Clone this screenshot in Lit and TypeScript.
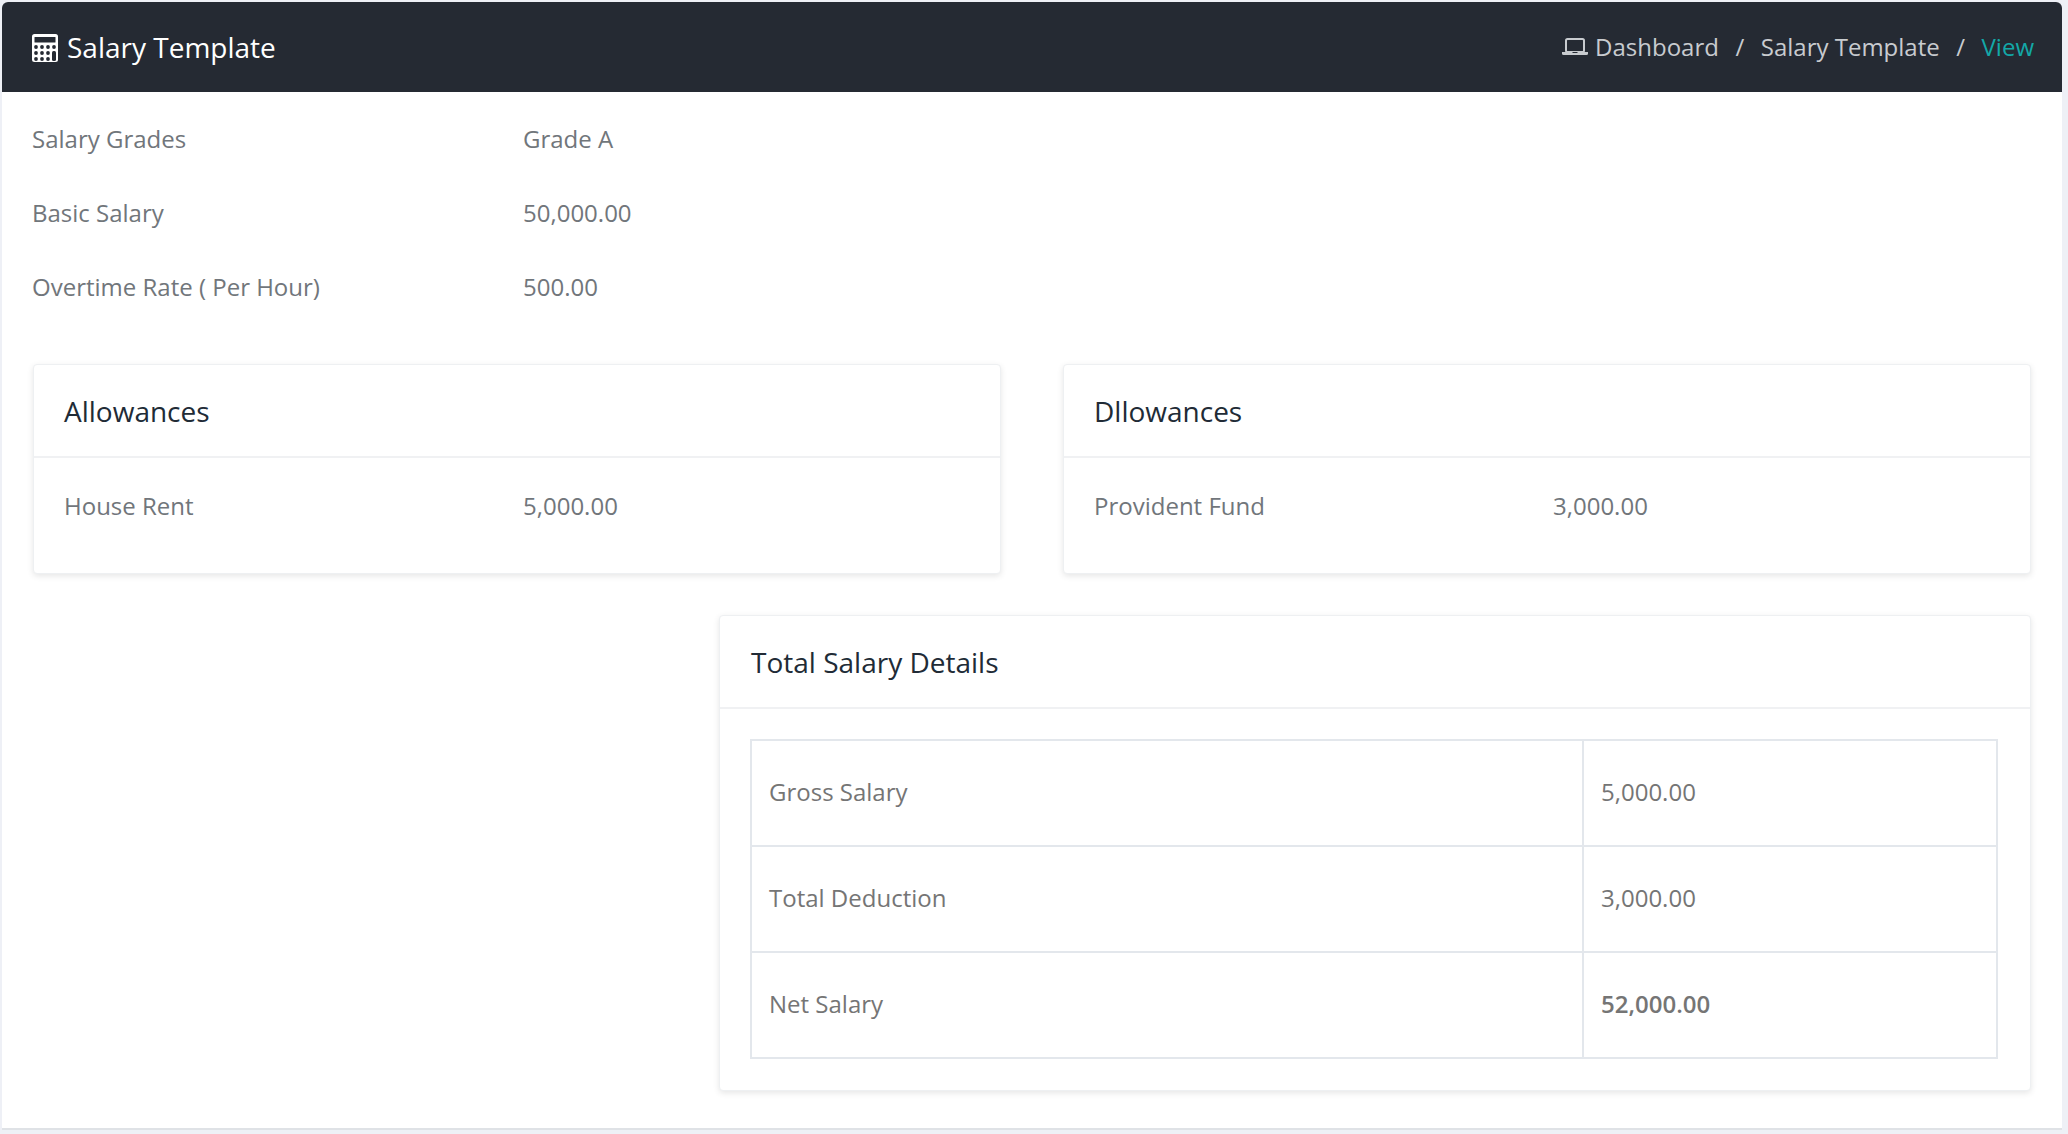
import { LitElement, html, css } from "lit";
import { customElement } from "lit/decorators.js";

@customElement("app-root")
export class AppRoot extends LitElement {
  static styles = css`
    :host { display: block; height: 1134px; background: #eef0f6; padding: 2px 6px 6px 2px; box-sizing: border-box; font-family: "Open Sans", sans-serif; font-size: 24px; color: #71767b; overflow: hidden; }
    .panel { background: #fff; height: 100%; border-radius: 6px 6px 0 0; box-shadow: 0 2px 0 #dfe2e6; }
    .bar { height: 90px; background: #252a33; border-radius: 6px 6px 0 0; display: flex; align-items: center; justify-content: space-between; padding: 0 28px 0 30px; color: #fff; }
    .title { display: flex; align-items: center; gap: 9px; font-size: 28px; }
    .title svg { margin-top: 2px; }
    .crumbs { display: flex; align-items: center; color: #c8cbcf; font-size: 24px; margin-top: -2px; }
    .crumbs svg { margin: 2px 7px 0 0; }
    .sep { margin: 0 16.500px; }
    .view { color: #13a8a8; }
    .body { padding: 9px 31px 0; }
    .row { display: flex; height: 74px; align-items: center; }
    .label { width: 491px; margin-left: -1px; }
    .cards { display: grid; grid-template-columns: 968px 968px; column-gap: 62px; margin-top: 41px; }
    .card { background: #fff; border-radius: 4px; border: 1px solid #eef0f2; box-shadow: 0 2px 6px rgba(0,0,0,.1); box-sizing: border-box; }
    .head { height: 93px; display: flex; align-items: center; padding: 0 30px; font-size: 28px; color: #212b36; border-bottom: 2px solid #f0f1f3; box-sizing: border-box; }
    .card .row { height: 115px; padding: 0 30px 20px; box-sizing: border-box; }
    .card .label { width: 459px; margin-left: 0; }
    .total { width: 1312px; margin: 41px 0 0 686px; height: 476px; box-sizing: border-box; }
    .total .head { padding-left: 31px; }
    .wrap { padding: 30px 32px 0 30px; }
    table { width: 100%; border-collapse: collapse; color: #757575; }
    td { border: 2px solid #e3e7ec; height: 106px; padding: 0 17px 3px; box-sizing: border-box; }
    td:first-child { width: 832px; }
    b { font-weight: 600; }
  `;
  render() {
    const dots = [
      [4, 13], [10, 13], [16, 13], [22, 13],
      [4, 19], [10, 19], [16, 19],
      [4, 25], [10, 25], [16, 25],
    ];
    return html`<div class="panel">
      <div class="bar">
        <div class="title">
        <svg width="26" height="28" viewBox="0 0 26 28"><rect width="26" height="28" rx="2.500" fill="#fff"/><rect x="2.500" y="3" width="21" height="5.500" rx="0.500" fill="#252a33"/>${dots.map(([x, y]) => html`<svg x=${x - 2} y=${y - 2} width="4" height="4" viewBox="0 0 4 4"><circle cx="2" cy="2" r="1.900" fill="#252a33"/></svg>`)}<rect x="20" y="17" width="4" height="10" rx="1.500" fill="#252a33"/></svg>
        <span>Salary Template</span></div>
        <div class="crumbs">
          <svg width="26" height="18" viewBox="0 0 26 18" fill="none"><rect x="4" y="1" width="18" height="13" rx="1.500" stroke="#c8cbcf" stroke-width="2"/><path d="M0 14h26v1.500a1.500 1.500 0 0 1-1.500 1.500h-23A1.500 1.500 0 0 1 0 15.500z" fill="#c8cbcf"/><path d="M10.500 14h5v1h-5z" fill="#252a33"/></svg>
          <span>Dashboard</span><span class="sep">/</span><span>Salary Template</span><span class="sep">/</span><span class="view">View</span>
        </div>
      </div>
      <div class="body">
        <div class="row"><div class="label">Salary Grades</div><div>Grade A</div></div>
        <div class="row"><div class="label">Basic Salary</div><div>50,000.00</div></div>
        <div class="row"><div class="label">Overtime Rate ( Per Hour)</div><div>500.00</div></div>
        <div class="cards">
          <div class="card"><div class="head">Allowances</div><div class="row"><div class="label">House Rent</div><div>5,000.00</div></div></div>
          <div class="card"><div class="head">Dllowances</div><div class="row"><div class="label">Provident Fund</div><div>3,000.00</div></div></div>
        </div>
        <div class="card total"><div class="head">Total Salary Details</div>
          <div class="wrap"><table>
            <tr><td>Gross Salary</td><td>5,000.00</td></tr>
            <tr><td>Total Deduction</td><td>3,000.00</td></tr>
            <tr><td>Net Salary</td><td><b>52,000.00</b></td></tr>
          </table></div>
        </div>
      </div>
    </div>`;
  }
}
